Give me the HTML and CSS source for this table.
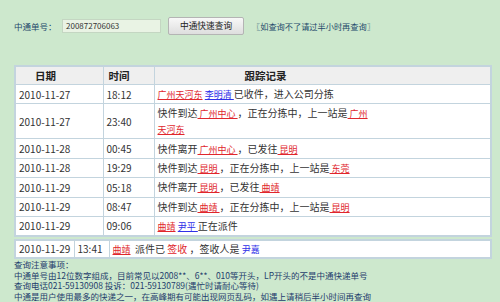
FILE: index.html
```html
<!DOCTYPE html>
<html lang="zh-CN">
<head>
<meta charset="utf-8">
<title>中通快递查询</title>
<link rel="stylesheet" href="styles.css">
</head>
<body>
<div class="page">
  <div class="search">
    <span class="label">中通单号：</span>
    <span class="input">200872706063</span>
    <span class="btn">中通快速查询</span>
    <span class="hint">〖如查询不了请过半小时再查询〗</span>
  </div>

  <table class="log">
    <colgroup><col class="c-date"><col class="c-time"><col></colgroup>
    <thead>
      <tr><th class="h-date">日期</th><th class="h-time">时间</th><th class="h-rec">跟踪记录</th></tr>
    </thead>
    <tbody>
      <tr><td>2010-11-27</td><td>18:12</td><td><a class="r">广州天河东</a> <a class="b">李明清&nbsp;</a>已收件，进入公司分拣</td></tr>
      <tr class="dbl"><td>2010-11-27</td><td>23:40</td><td>快件到达<a class="r">&nbsp;广州中心&nbsp;</a>，正在分拣中，上一站是<a class="r">&nbsp;广州<br>天河东</a></td></tr>
      <tr><td>2010-11-28</td><td>00:45</td><td>快件离开<a class="r">&nbsp;广州中心&nbsp;</a>，已发往<a class="r">&nbsp;昆明</a></td></tr>
      <tr><td>2010-11-28</td><td>19:29</td><td>快件到达<a class="r">&nbsp;昆明&nbsp;</a>，正在分拣中，上一站是<a class="r">&nbsp;东莞</a></td></tr>
      <tr><td>2010-11-29</td><td>05:18</td><td>快件离开<a class="r">&nbsp;昆明&nbsp;</a>，已发往<a class="r">&nbsp;曲靖</a></td></tr>
      <tr><td>2010-11-29</td><td>08:47</td><td>快件到达<a class="r">&nbsp;曲靖&nbsp;</a>，正在分拣中，上一站是<a class="r">&nbsp;昆明</a></td></tr>
      <tr><td>2010-11-29</td><td>09:06</td><td><a class="r">曲靖</a> <a class="b">尹平&nbsp;</a>正在派件</td></tr>
    </tbody>
  </table>

  <table class="last">
    <colgroup><col class="l-date"><col class="l-time"><col></colgroup>
    <tr><td>2010-11-29</td><td>13:41</td><td><a class="r">曲靖</a>&nbsp; 派件已 <span class="red">签收</span> ，签收人是 <span class="blue">尹嘉</span></td></tr>
  </table>

  <div class="notes">
    <p>查询注意事项：</p>
    <p>中通单号由12位数字组成，目前常见以2008**、6**、010等开头，LP开头的不是中通快递单号</p>
    <p>查询电话021-59130908 投诉：021-59130789(遇忙时请耐心等待)</p>
    <p>中通是用户使用最多的快递之一，在高峰期有可能出现网页乱码，如遇上请稍后半小时间再查询</p>
  </div>
</div>
</body>
</html>
```

FILE: styles.css
```css
html, body {
  margin: 0;
  padding: 0;
  background: #cde8cd;
  font-family: "Noto Sans CJK SC", "Noto Sans", sans-serif;
}
.page {
  width: 500px;
  height: 302px;
  overflow: hidden;
  padding: 17px 0 0 14px;
  box-sizing: border-box;
}
.search {
  display: flex;
  align-items: center;
  height: 18px;
  font-size: 8.5px;
  color: #24496b;
}
.label {
  width: 48px;
}
.input {
  box-sizing: border-box;
  width: 99px;
  height: 14px;
  line-height: 12px;
  padding-left: 3px;
  background: #e9f3e4;
  border: 1px solid #c4d6c2;
  color: #333;
  font-size: 8px;
}
.btn {
  box-sizing: border-box;
  margin-left: 7px;
  width: 76px;
  height: 18px;
  line-height: 16px;
  text-align: center;
  background: linear-gradient(#f8f8f8, #dedede);
  border: 1px solid #b4b4b4;
  border-radius: 2px;
  color: #222;
  font-size: 8.7px;
}
.hint {
  margin-left: 8px;
  font-size: 8.2px;
}

table {
  border-collapse: collapse;
  width: 478px;
  table-layout: fixed;
  background: #fff;
  font-size: 10px;
  color: #333;
}
.log {
  margin-top: 30px;
  border: 2px solid #c3d4de;
}
.c-date { width: 88px; }
.c-time { width: 51px; }
td, th {
  border: 1px solid #c3d4de;
  padding: 0 0 0 3px;
  text-align: left;
  line-height: 15px;
  vertical-align: middle;
}
.log tbody tr { height: 19.4px; }
.log tbody tr.dbl { height: 35px; }
th {
  background: #efefef;
  font-weight: bold;
  height: 17px;
  font-size: 10.5px;
  color: #222;
}
.h-date { padding-left: 19px; }
.h-time { padding-left: 5px; }
.h-rec { padding-left: 90px; }
a {
  font-size: 9px;
  text-decoration: underline;
}
a.r { color: #e0262c; }
a.b { color: #3030e8; }
.last {
  margin-top: 2px;
  border: 2px solid #c3d4de;
}
.last tr { height: 18px; }
.l-date { width: 59px; }
.l-time { width: 35px; }
.red { color: #e0262c; }
.blue { color: #3030e8; font-size: 9px; }
.notes {
  margin-top: 0;
  font-size: 8.5px;
  line-height: 10.7px;
  color: #1f3d6c;
}
.notes p { margin: 0; white-space: nowrap; }
```
